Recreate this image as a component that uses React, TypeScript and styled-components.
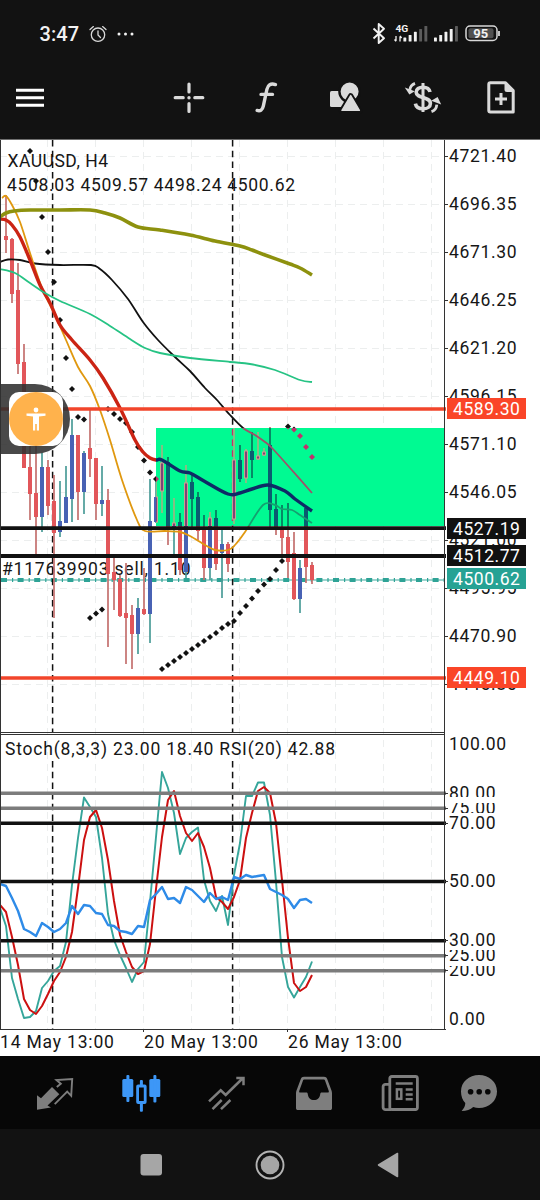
import React from "react";
import styled, { createGlobalStyle, css } from "styled-components";

const GlobalStyle = createGlobalStyle`
  * { box-sizing: border-box; }
  body { margin: 0; background: #121212; font-family: Roboto, "Liberation Sans", sans-serif; }
`;

const Screen = styled.div`
  width: 540px;
  height: 1200px;
  display: flex;
  flex-direction: column;
  background: #121212;
  overflow: hidden;
`;

const StatusBar = styled.header`
  height: 66px;
  display: flex;
  align-items: center;
  justify-content: space-between;
  padding: 2px 40px 0 39.5px;
  color: #f2f2f2;
`;

const StatusLeft = styled.div`
  display: flex;
  align-items: center;
  gap: 10px;
`;

const Clock = styled.span`
  font-size: 20px;
  font-weight: 500;
  line-height: 24px;
  letter-spacing: 0.1px;
`;

const Toolbar = styled.nav`
  height: 73px;
  display: flex;
  align-items: center;
  justify-content: space-between;
  padding: 0 0 9px 10px;
`;

const ToolGroup = styled.div`
  display: flex;
`;

const ToolButton = styled.button<{ $width?: number }>`
  width: ${(p) => p.$width ?? 78}px;
  height: 40px;
  padding: 0;
  border: 0;
  background: none;
  display: flex;
  align-items: center;
  justify-content: center;
`;

const ChartArea = styled.main`
  position: relative;
  height: 917px;
  background: #fff;
  color: #161616;
  border-top: 1px solid #6e6e6e;
`;

const ChartBody = styled.div`
  display: flex;
  height: 890px;
`;

const Plot = styled.svg`
  display: block;
  flex: none;
  overflow: visible;
  text {
    font-family: Roboto, "Liberation Sans", sans-serif;
    font-size: 17.5px;
    fill: #161616;
  }
`;

const axisText = css`
  font-size: 17.5px;
  letter-spacing: 0.65px;
  white-space: nowrap;
`;

const Axis = styled.div`
  position: relative;
  flex: 1;
`;

const PriceScale = styled.div`
  height: 594px;
  padding: 4px 0 0 3px;
  overflow: hidden;
`;

const PriceLabel = styled.div`
  ${axisText}
  line-height: 24px;
  height: 48px;
`;

const LevelScale = styled.div`
  padding-left: 3px;
`;

const LevelLabel = styled.div<{ $height: number; $line: number; $before?: number }>`
  ${axisText}
  margin-top: ${(p) => p.$before ?? 0}px;
  height: ${(p) => p.$height}px;
  line-height: ${(p) => p.$line}px;
  overflow: hidden;
`;

const PriceTag = styled.div<{ $top: number; $color: string }>`
  position: absolute;
  left: 1px;
  top: ${(p) => p.$top}px;
  width: 79px;
  height: 21px;
  padding-left: 6px;
  background: ${(p) => p.$color};
  color: #fff;
  font-size: 17.5px;
  line-height: 22px;
  letter-spacing: 0.55px;
`;

const TimeScale = styled.div`
  display: flex;
`;

const TimeLabel = styled.div`
  width: 144px;
  font-size: 17.5px;
  line-height: 25px;
  letter-spacing: 0.82px;
  white-space: nowrap;
`;

const AssistBubble = styled.div`
  position: absolute;
  left: 0;
  top: 244px;
  width: 70px;
  height: 70px;
  padding-left: 9px;
  border-radius: 0 35px 35px 0;
  background: rgba(48, 48, 48, 0.88);
  display: flex;
  align-items: center;
`;

const AssistTile = styled.div`
  width: 54px;
  height: 54px;
  border-radius: 10px;
  background: #fff;
`;

const AssistDisc = styled.div`
  width: 54px;
  height: 54px;
  border-radius: 50%;
  background: #ffb24c;
  display: flex;
  align-items: center;
  justify-content: center;
`;

const TabBar = styled.nav`
  height: 73px;
  background: #070707;
  display: flex;
  align-items: center;
  padding-left: 11.5px;
`;

const NavBar = styled.footer`
  height: 71px;
  display: flex;
  align-items: center;
  justify-content: center;
  gap: 79px;
`;

/* ---------- chart data ---------- */

type Candle = [x: number, high: number, low: number, top: number, bottom: number, dir: "up" | "down"];
type Point = [number, number];

const candles: Candle[] = [
  [6, 195, 253, 236, 240, "down"],
  [12, 238, 303, 239, 294, "down"],
  [18, 263, 374, 290, 364, "down"],
  [24, 344, 468, 362, 468, "down"],
  [30, 440, 520, 467, 494, "down"],
  [36, 440, 555, 493, 517, "down"],
  [42, 453, 532, 467, 517, "up"],
  [48, 460, 515, 467, 506, "down"],
  [54, 475, 618, 501, 533, "down"],
  [60, 481, 537, 521, 532, "up"],
  [66, 466, 523, 497, 523, "up"],
  [72, 419, 522, 435, 499, "up"],
  [78, 435, 520, 435, 492, "down"],
  [84, 451, 514, 453, 492, "up"],
  [90, 410, 477, 448, 459, "down"],
  [96, 458, 520, 458, 504, "down"],
  [102, 466, 516, 500, 504, "up"],
  [108, 489, 647, 500, 574, "down"],
  [114, 554, 610, 572, 580, "down"],
  [120, 575, 617, 579, 616, "down"],
  [126, 563, 664, 613, 618, "down"],
  [132, 605, 669, 615, 634, "down"],
  [138, 598, 654, 608, 634, "up"],
  [144, 568, 615, 609, 614, "down"],
  [150, 479, 643, 521, 614, "up"],
  [156, 478, 523, 497, 522, "up"],
  [162, 445, 513, 463, 491, "up"],
  [168, 457, 545, 462, 530, "down"],
  [174, 498, 555, 523, 530, "up"],
  [180, 513, 575, 522, 570, "down"],
  [186, 465, 578, 483, 572, "up"],
  [192, 475, 527, 482, 499, "down"],
  [198, 492, 540, 497, 531, "down"],
  [204, 515, 580, 530, 568, "down"],
  [210, 512, 580, 518, 568, "up"],
  [216, 510, 570, 518, 564, "down"],
  [222, 530, 598, 544, 553, "up"],
  [228, 542, 572, 544, 564, "down"],
  [234, 428, 524, 460, 519, "up"],
  [240, 445, 482, 460, 479, "down"],
  [246, 449, 483, 451, 478, "up"],
  [252, 432, 478, 451, 460, "down"],
  [258, 432, 460, 456, 459, "up"],
  [264, 448, 456, 452, 455, "up"],
  [270, 427, 527, 445, 510, "down"],
  [276, 494, 535, 509, 530, "down"],
  [282, 505, 558, 530, 538, "down"],
  [288, 503, 578, 537, 562, "down"],
  [294, 532, 600, 553, 599, "down"],
  [300, 560, 613, 568, 599, "up"],
  [306, 507, 583, 508, 567, "down"],
  [312, 562, 584, 565, 580, "down"],
];

const maSlow: Point[] = [[0, 217], [6, 213], [14, 211], [30, 210], [60, 210], [90, 210], [105, 213], [120, 218], [138, 227], [160, 230], [190, 235], [215, 241], [240, 246], [252, 250], [265, 255], [290, 264], [300, 268], [312, 275]];
const maBlack: Point[] = [[0, 262], [8, 259.5], [20, 260], [35, 263.5], [60, 265], [91, 265], [100, 269], [112, 280], [128, 299], [143, 322], [158, 340], [175, 357], [190, 371], [205, 388], [217, 400], [230, 415], [243, 428], [255, 435], [265, 442], [272, 448], [290, 468], [312, 493]];
const maGreen: Point[] = [[0, 269], [15, 273], [30, 283], [45, 293], [60, 301], [90, 314], [110, 326], [130, 339], [145, 348], [160, 353], [190, 358], [230, 362], [250, 364], [275, 370], [300, 380], [312, 382]];
const maOrange: Point[] = [[2, 198], [6, 196], [12, 205], [20, 222], [30, 253], [42, 288], [55, 315], [66, 340], [78, 367], [90, 386], [100, 410], [110, 440], [122, 480], [137, 520], [145, 531], [165, 531], [180, 532], [190, 536], [205, 545], [215, 550], [228, 550], [235, 545], [245, 532], [263, 505], [275, 505], [282, 509], [292, 510], [300, 515], [312, 523]];
const maRed: Point[] = [[0, 219], [6, 220], [12, 225], [20, 237], [30, 260], [40, 285], [50, 303], [60, 325], [72, 340], [90, 360], [103, 378], [120, 408], [135, 440], [143, 452], [150, 458], [156, 460], [162, 460], [180, 471], [190, 473], [204, 481], [228, 494], [240, 493], [252, 489], [268, 485], [285, 491], [295, 499], [312, 511]];

const sarDots: Point[] = [
  [30, 151], [36, 181], [42, 217], [48, 252], [54, 282], [60, 320], [66, 358], [72, 389], [78, 417], [84, 419.5],
  [108, 409], [114, 414], [120, 419], [126, 423], [132, 432], [138, 447], [144, 460.5], [150, 472.5], [156, 479],
  [90, 618], [96, 613.5], [102, 609.5],
  [162, 669], [168, 665], [174, 661], [180, 657], [186, 653], [192, 649], [198, 645], [204, 641], [210, 637], [216, 633], [222, 628], [228, 624],
  [234, 621], [240, 613], [246, 606], [252, 598.5], [258, 591], [264, 584.5], [270, 579], [276, 570], [282, 561],
  [288, 426.5], [294, 429.5], [300, 436], [306, 447], [312, 457],
];

const stochMain = [908, 926, 978, 999, 1018, 1017, 1011, 988, 981, 971, 966, 942, 885, 838, 797.5, 807, 817, 858, 914, 940, 955, 968, 982, 969, 962, 902, 837, 772, 788, 813, 854, 838, 832, 827.5, 880, 901, 911, 896, 925, 875, 843, 796, 796, 782.5, 782.5, 815, 882, 957, 987, 997.5, 987, 977, 961.5];
const stochSignal = [905, 912, 937, 965, 999, 1010, 1014, 1006, 994, 981, 972, 957, 932, 888, 840, 817, 810, 828, 860, 901, 935, 952, 967, 974, 971, 944, 889, 837, 800, 791, 816, 833, 841, 833, 847, 868, 897, 902, 909, 897, 880, 838, 813, 791, 787, 793, 823, 880, 938, 983, 991, 987, 975];
const rsi = [884, 886, 898, 911, 929, 932, 936, 923, 927, 932, 929, 923, 906, 914, 905, 906, 913, 914, 925, 926, 931, 932, 934, 926, 927, 900, 894, 887, 899, 898, 903, 887, 890, 896, 902, 893, 899, 897, 900, 877, 879, 875, 877, 876, 875, 889, 892, 895, 899, 908, 900, 899, 903];

const toPoints = (values: number[]) => values.map((y, i) => `${i * 6},${y}`).join(" ");

/* Catmull-Rom spline through the points, written as cubic Béziers. */
const smooth = (pts: Point[]) =>
  pts.slice(1).reduce((d, p, i) => {
    const a = pts[Math.max(i - 1, 0)];
    const b = pts[i];
    const c = pts[Math.min(i + 2, pts.length - 1)];
    return `${d}C${b[0] + (p[0] - a[0]) / 6} ${b[1] + (p[1] - a[1]) / 6} ${p[0] - (c[0] - b[0]) / 6} ${p[1] - (c[1] - b[1]) / 6} ${p[0]} ${p[1]}`;
  }, `M${pts[0][0]} ${pts[0][1]}`);

const prices = ["4721.40", "4696.35", "4671.30", "4646.25", "4621.20", "4596.15", "4571.10", "4546.05", "4521.00", "4495.95", "4470.90", "4445.85"];

interface Palette {
  upBody: string; upWick: string; downBody: string; downWick: string;
  red: string; orange: string; black: string; sar: string; upOutline?: string;
}

const plain: Palette = {
  upBody: "#4862b4", upWick: "#4a9c98", downBody: "#e2565a", downWick: "#c4706e",
  red: "#cb2414", orange: "#e0980f", black: "#111", sar: "#111",
};

const overZone: Palette = {
  upBody: "#7c4478", upWick: "#9cb482", downBody: "#0a5c70", downWick: "#08745e",
  red: "#0e2a66", orange: "#14a070", black: "#a0506a", sar: "#c2306c", upOutline: "#c8a090",
};

const Series = ({ p }: { p: Palette }) => (
  <g>
    <path d="M52.6 140V733M232.6 140V733" stroke={p.sar} strokeWidth="1.5" strokeDasharray="6.5 4.2" />
    {candles.map(([x, high, low, top, bottom, dir]) => {
      const up = dir === "up";
      return (
        <g key={x}>
          <line x1={x} x2={x} y1={high} y2={low} stroke={up ? p.upWick : p.downWick} strokeWidth="1.7" />
          {up && p.upOutline ? (
            <rect x={x - 1.5} y={top} width="3" height={bottom - top} fill={p.upBody} stroke={p.upOutline} strokeWidth="1" />
          ) : (
            <rect x={x - 2} y={top} width="4" height={bottom - top} fill={up ? p.upBody : p.downBody} />
          )}
        </g>
      );
    })}
    {sarDots.map(([x, y]) => (
      <path key={`${x}-${y}`} d={`M${x - 3} ${y}l3-3 3 3-3 3z`} fill={p.sar} />
    ))}
    <g fill="none" strokeLinejoin="round">
      <path d={smooth(maBlack)} stroke={p.black} strokeWidth="1.8" />
      <path d={smooth(maOrange)} stroke={p.orange} strokeWidth="1.8" />
      <path d={smooth(maRed)} stroke={p.red} strokeWidth="3.4" />
    </g>
  </g>
);

const gridX = [48, 96, 144, 192, 240, 288, 336, 384, 432];
const gridY = prices.map((_, i) => 156 + i * 48);

const Chart = () => (
  <Plot width="446" height="890" viewBox="0 140 446 890">
    <defs>
      <clipPath id="zone"><rect x="156" y="428" width="289" height="98" /></clipPath>
    </defs>
    <g stroke="#eceeee" strokeWidth="1" strokeDasharray="7 5">
      {gridX.map((x) => <path key={x} d={`M${x - 0.5} 140V1029`} />)}
      {gridY.map((y) => <path key={y} d={`M0 ${y + 0.5}H445`} />)}
    </g>
    <text x="7.5" y="166.5" textLength="100.5">XAUUSD, H4</text>
    <text x="7" y="190.5" textLength="288">4508.03 4509.57 4498.24 4500.62</text>
    <text x="2" y="574.5" textLength="188.5">#117639903 sell, 1.10</text>
    <path d="M0 580H445" stroke="#3aa79b" strokeWidth="1.2" />
    <path d="M1 580H445" stroke="#2fa396" strokeWidth="4" strokeDasharray="6 5 1.2 4.4" />
    <Series p={plain} />
    <g fill="none" strokeLinejoin="round">
      <path d={smooth(maSlow)} stroke="#8d910e" strokeWidth="3.6" />
      <path d={smooth(maGreen)} stroke="#26c384" strokeWidth="1.8" />
    </g>
    <g clipPath="url(#zone)">
      <rect x="156" y="428" width="289" height="98" fill="#00fa92" />
      <Series p={overZone} />
    </g>
    <path d="M0 409H446M0 678H446" stroke="#f2452b" strokeWidth="3.6" />
    <path d="M0 528.2H446M0 556H446" stroke="#111" strokeWidth="3.8" />

    <text x="5" y="755" textLength="330">Stoch(8,3,3) 23.00 18.40 RSI(20) 42.88</text>
    <path d="M52.6 761V1029M232.6 761V1029" stroke="#111" strokeWidth="1.5" strokeDasharray="6.5 4.2" />
    <g fill="none" strokeLinejoin="round">
      <polyline points={toPoints(stochMain)} stroke="#35a59a" strokeWidth="1.9" />
      <polyline points={toPoints(stochSignal)} stroke="#cc1010" strokeWidth="2" />
      <polyline points={toPoints(rsi)} stroke="#2e8be8" strokeWidth="2.4" />
    </g>
    <path d="M0 793.2H446M0 808.2H446M0 955.8H446M0 970.8H446" stroke="#7c7c7c" strokeWidth="3.6" />
    <path d="M0 823.2H446M0 881.5H446M0 940.7H446" stroke="#111" strokeWidth="3.6" />

    <g stroke="#333" strokeWidth="1" fill="none">
      <path d="M.5 140V1029.5M444.5 140V1029.5M0 1029.5H446M143.5 1029V1032M287.5 1029V1032M0 732.5H445M0 734.5H445" />
      {gridY.map((y) => <path key={y} d={`M444 ${y + 0.5}h4`} />)}
      {[793, 808, 823, 881, 940, 955, 970].map((y) => <path key={y} d={`M444 ${y + 0.5}h4`} />)}
    </g>
  </Plot>
);

/* ---------- icons ---------- */

const Icon = ({ children, size = 40 }: { children: React.ReactNode; size?: number }) => (
  <svg width={size} height={size} viewBox={`0 0 ${size} ${size}`} fill="none">{children}</svg>
);

const light = "#dadada";
const dim = "#7e7e7e";

const MenuIcon = () => <Icon><path d="M6 12.2h28M6 19.7h28M6 27.2h28" stroke="#fff" strokeWidth="3" /></Icon>;

const CrosshairIcon = () => (
  <Icon>
    <path d="M20 6v8M20 25.5v8M6.2 19.7h8M25.8 19.7h8" stroke={light} strokeWidth="3.2" strokeLinecap="round" />
    <circle cx="20" cy="19.7" r="1.7" fill={light} />
  </Icon>
);

const FunctionIcon = () => (
  <Icon>
    <path d="M28.5 6.6c-5-1.6-7.6.4-8.600 4.800l-3.600 16.800c-.8 3.800-3 5.200-6.200 4.200M14 16.400h11.500" stroke={light} strokeWidth="3.400" strokeLinecap="round" />
  </Icon>
);

const ShapesIcon = () => (
  <Icon>
    <rect x="5" y="13" width="14" height="16" rx="1.6" fill={light} />
    <circle cx="24.6" cy="13.6" r="10.2" fill={light} stroke="#121212" strokeWidth="2.4" />
    <path d="M25.7 17.6L35 33H16.4z" fill={light} stroke="#121212" strokeWidth="5" strokeLinejoin="round" />
    <path d="M25.7 17.6L34.4 32.4H17z" fill={light} stroke={light} strokeWidth="1.4" strokeLinejoin="round" />
  </Icon>
);

const DollarIcon = () => (
  <Icon>
    <path d="M20 5v29" stroke={light} strokeWidth="3" />
    <path d="M27 14c-.6-3-3.400-4.800-7-4.800-4 0-6.800 2-6.800 5 0 6.400 14.200 4.200 14.200 11.200 0 3.400-3.200 5.400-7.400 5.400-4.200 0-7-2-7.600-5.200" stroke={light} strokeWidth="3.600" />
    <path d="M12 5.400C8.800 6.600 7.200 8.600 6.800 12" stroke={light} strokeWidth="2.800" />
    <path d="M1.800 9.400l10 3.800-5.400 3.400z" fill={light} />
    <path d="M28.500 33.600c3.400-1.200 5-3.600 5.300-7" stroke={light} strokeWidth="2.800" />
    <path d="M38.200 26.600l-10-3.800 6.400-3.800z" fill={light} />
  </Icon>
);

const NewOrderIcon = () => (
  <Icon>
    <path d="M9 4.800h15.500l7.700 7.800V34H9.300a1.500 1.500 0 0 1-1.500-1.500V6.300A1.500 1.500 0 0 1 9.300 4.800z" stroke={light} strokeWidth="3" strokeLinejoin="round" />
    <path d="M23.500 4l10 10h-7.500a2.500 2.500 0 0 1-2.500-2.500z" fill={light} />
    <path d="M20 15v12M14 21h12" stroke={light} strokeWidth="3" />
  </Icon>
);

const TradeIcon = () => (
  <Icon>
    <path d="M2 22.300l4 3L17 14l7.300 7.300L12.500 32.500l3.500 2L2 36.700z" fill={dim} />
    <path d="M21.800 14l4-3.300-4.300-3.600L37.200 6l-1 16.800-4-4.200-12.500 12.600" stroke={dim} strokeWidth="1.900" />
  </Icon>
);

const CandlesIcon = () => (
  <Icon>
    <g fill="#3d97f7">
      <rect x="1.300" y="6" width="11" height="18" rx="1.500" />
      <rect x="5.400" y="2" width="3" height="27" rx="1" />
      <rect x="28.300" y="6" width="11" height="18" rx="1.500" />
      <rect x="32.400" y="2" width="3" height="27.600" rx="1" />
      <rect x="18.900" y="7" width="3" height="6" rx="1" />
      <rect x="18.900" y="30" width="3" height="8.700" rx="1" />
    </g>
    <rect x="16.600" y="13" width="7.600" height="16.500" rx="0.500" stroke="#3d97f7" strokeWidth="2.800" />
  </Icon>
);

const TrendIcon = () => (
  <Icon>
    <path d="M2 28.300l11.700-11 5 4.700L36 5M29.300 4.900h7.200v7.400M5.500 36.200l9.200-9.200M14 36.200l9.400-9.200" stroke={dim} strokeWidth="2.500" />
  </Icon>
);

const InboxIcon = () => (
  <Icon>
    <path fillRule="evenodd" fill={dim} d="M10 3.700h20c1.700 0 2.600.7 3.200 2.300l4.300 11.500c.4 1 .5 1.800.5 3V35c0 1.400-.7 2-2 2H4c-1.300 0-2-.6-2-2V20.500c0-1.200.1-2 .5-3L6.800 6c.6-1.600 1.500-2.300 3.200-2.300zM10.500 6.500c-.8 0-1.200.3-1.500 1L5.300 17.700c-.4 1.200 0 1.900 1.200 1.900h5.700c1.200 0 1.500.5 1.600 1.600.5 3.600 2.700 5.900 6.200 5.900s5.700-2.300 6.200-5.900c.1-1.100.4-1.600 1.600-1.600h5.700c1.200 0 1.600-.7 1.200-1.900L31 7.500c-.3-.7-.7-1-1.500-1z" />
  </Icon>
);

const NewsIcon = () => (
  <Icon>
    <rect x="9.800" y="3.500" width="27.600" height="33" rx="2" stroke={dim} strokeWidth="2.800" />
    <path d="M9 11.300H5.500A2.400 2.400 0 0 0 3.100 13.700v20.500a2.400 2.400 0 0 0 2.400 2.400H11" stroke={dim} strokeWidth="2.800" />
    <path d="M15.700 10.400h17M25.700 16.600h7M25.700 21.400h7M25.700 26.200h7" stroke={dim} strokeWidth="2.500" />
    <rect x="16.900" y="16.400" width="4.400" height="9.400" stroke={dim} strokeWidth="2.500" />
  </Icon>
);

const ChatIcon = () => (
  <Icon>
    <path d="M20 2c10 0 18 7 18 16.400S30 35 20 35c-2 0-4-.3-5.800-.9C11.500 36.600 7.500 38 2.600 38c2.400-2.600 3.600-5 3.700-8C3.500 27 2 23 2 18.400 2 9 10 2 20 2z" fill={dim} />
    <g fill="#070707"><circle cx="11.600" cy="18.700" r="2.800" /><circle cx="20.200" cy="18.700" r="2.800" /><circle cx="28.800" cy="18.700" r="2.800" /></g>
  </Icon>
);

const AlarmIcon = () => (
  <svg width="18" height="18" viewBox="0 0 18 18" fill="none" stroke="#d8d8d8" strokeWidth="1.300" strokeLinecap="round">
    <circle cx="9" cy="9.700" r="6.700" />
    <path d="M9 6v4l2.500 2.500M1 4.600L4.400 1.600M17 4.600L13.600 1.600" />
  </svg>
);

const barTops = [37.5, 35, 31.8, 29, 26];
const Bars = ({ x, lit }: { x: number; lit: number }) => (
  <g>
    {barTops.map((y, i) => (
      <rect key={y} x={x + i * 5.25} y={y - 20} width="2.900" height={41.5 - y} rx="0.600" fill={i < lit ? "#f2f2f2" : "#5c5c5c"} />
    ))}
  </g>
);

const StatusText = styled.text`
  font-family: Roboto, "Liberation Sans", sans-serif;
  font-weight: 700;
  fill: #f2f2f2;
`;

const StatusIcons = () => (
  <svg width="130" height="28" viewBox="370 0 130 28" fill="none">
    <path d="M373.500 8.500l10.500 9.800-5.300 4.700V4l5.300 4.700-10.500 9.800" stroke="#f2f2f2" strokeWidth="1.900" strokeLinejoin="round" />
    <StatusText x="395.500" y="12" fontSize="9.800" textLength="12.800" lengthAdjust="spacingAndGlyphs">4G</StatusText>
    <path d="M396 16v5M394.500 19.500l1.500 1.800M400 21.500v-5M400 16l1.600 2" stroke="#f2f2f2" strokeWidth="1.300" />
    <Bars x={403.4} lit={3} />
    <Bars x={434} lit={4} />
    <rect x="466" y="6" width="31" height="14.500" rx="4" stroke="#d8d8d8" strokeWidth="1.500" />
    <rect x="468.500" y="8.300" width="25" height="10" rx="2" fill="#505050" />
    <path d="M499 11v5" stroke="#d8d8d8" strokeWidth="1.800" />
    <StatusText x="480.800" y="18" fontSize="13" textAnchor="middle">95</StatusText>
  </svg>
);

const tools = [CrosshairIcon, FunctionIcon, ShapesIcon, DollarIcon, NewOrderIcon];
const tabs = [TradeIcon, CandlesIcon, TrendIcon, InboxIcon, NewsIcon];

export default function App() {
  return (
    <Screen>
      <GlobalStyle />
      <StatusBar>
        <StatusLeft>
          <Clock>3:47</Clock>
          <AlarmIcon />
          <svg width="18" height="4" viewBox="0 0 18 4" fill="#f2f2f2">
            <circle cx="2" cy="2" r="1.500" /><circle cx="8.500" cy="2" r="1.500" /><circle cx="15" cy="2" r="1.500" />
          </svg>
        </StatusLeft>
        <StatusIcons />
      </StatusBar>
      <Toolbar>
        <ToolButton $width={40}><MenuIcon /></ToolButton>
        <ToolGroup>
          {tools.map((Tool, i) => <ToolButton key={i}><Tool /></ToolButton>)}
        </ToolGroup>
      </Toolbar>
      <ChartArea>
        <ChartBody>
          <Chart />
          <Axis>
            <PriceScale>
              {prices.map((price) => <PriceLabel key={price}>{price}</PriceLabel>)}
            </PriceScale>
            <LevelScale>
              <LevelLabel $height={20} $line={20}>100.00</LevelLabel>
              <LevelLabel $before={31} $height={12} $line={16}>80.00</LevelLabel>
              <LevelLabel $before={6} $height={10} $line={10}>75.00</LevelLabel>
              <LevelLabel $before={2} $height={16} $line={16}>70.00</LevelLabel>
              <LevelLabel $before={41} $height={18} $line={18}>50.00</LevelLabel>
              <LevelLabel $before={42} $height={16} $line={17}>30.00</LevelLabel>
              <LevelLabel $before={2} $height={11} $line={11}>25.00</LevelLabel>
              <LevelLabel $before={5} $height={12} $line={9}>20.00</LevelLabel>
              <LevelLabel $before={31} $height={20} $line={20}>0.00</LevelLabel>
            </LevelScale>
            <PriceTag $top={258} $color="#fa4528">4589.30</PriceTag>
            <PriceTag $top={378} $color="#111">4527.19</PriceTag>
            <PriceTag $top={405} $color="#111">4512.77</PriceTag>
            <PriceTag $top={428} $color="#26a294">4500.62</PriceTag>
            <PriceTag $top={527} $color="#fa4528">4449.10</PriceTag>
          </Axis>
        </ChartBody>
        <TimeScale>
          <TimeLabel>14 May 13:00</TimeLabel>
          <TimeLabel>20 May 13:00</TimeLabel>
          <TimeLabel>26 May 13:00</TimeLabel>
        </TimeScale>
        <AssistBubble>
          <AssistTile>
            <AssistDisc>
              <svg width="20" height="24" viewBox="0 0 20 24" fill="#fff">
                <circle cx="10" cy="3" r="2.400" />
                <path d="M.5 6.500h19v2.200L13 9.500V23.500h-2.200V17H9.200v6.500H7v-14L.5 8.700z" />
              </svg>
            </AssistDisc>
          </AssistTile>
        </AssistBubble>
      </ChartArea>
      <TabBar>
        {tabs.map((Tab, i) => <ToolButton key={i} $width={86.4}><Tab /></ToolButton>)}
        <ToolButton $width={72}><ChatIcon /></ToolButton>
      </TabBar>
      <NavBar>
        <Icon>
          <rect x="9.500" y="9" width="21.500" height="21.500" rx="3" fill="#a6a6a6" />
        </Icon>
        <Icon>
          <circle cx="20" cy="20" r="13.500" stroke="#b4b4b4" strokeWidth="1.900" />
          <circle cx="20" cy="20" r="9.300" fill="#a6a6a6" />
        </Icon>
        <Icon>
          <path d="M28.500 8.500v23L9.500 20z" fill="#a6a6a6" stroke="#a6a6a6" strokeWidth="1.500" strokeLinejoin="round" />
        </Icon>
      </NavBar>
    </Screen>
  );
}
